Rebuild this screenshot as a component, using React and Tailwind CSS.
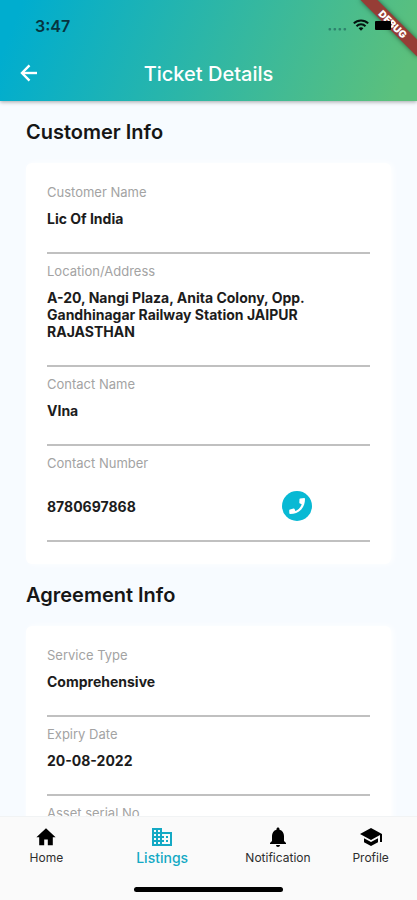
import React from "react";
import { MdBusiness, MdNotifications, MdSchool } from "react-icons/md";

const HomeIcon = ({ className }) => {
  return (
    <svg className={className} viewBox="0 0 24 24" fill="currentColor">
      <path d="M12 3.2L21.6 12.2H18.8V20.2H13.8V14.4H10.2V20.2H5.2V12.2H2.4Z" />
    </svg>
  );
};

const customerInfo = [
  { label: "Customer Name", value: "Lic Of India" },
  {
    label: "Location/Address",
    value: "A-20, Nangi Plaza, Anita Colony, Opp. Gandhinagar Railway Station JAIPUR RAJASTHAN",
  },
  { label: "Contact Name", value: "VIna" },
  { label: "Contact Number", value: "8780697868", phone: true },
];

const agreementInfo = [
  { label: "Service Type", value: "Comprehensive" },
  { label: "Expiry Date", value: "20-08-2022" },
  { label: "Asset serial No", value: "" },
];

const tabs = [
  { name: "Home", icon: HomeIcon },
  { name: "Listings", icon: MdBusiness, active: true },
  { name: "Notification", icon: MdNotifications },
  { name: "Profile", icon: MdSchool },
];

const StatusBar = () => {
  return (
    <div className="flex h-[46px] items-end justify-between pr-[26px] pl-[35px] text-[#06343f]">
      <span className="pb-2.5 text-[16px] leading-5 font-semibold">3:47</span>
      <div className="relative z-10 flex items-center gap-[6px] pb-[14px]">
        {/* signal */}
        <svg width="19" height="14" viewBox="0 0 19 14" fill="#1d5c58" fillOpacity="0.6">
          <rect x="0.5" y="10" width="2.6" height="2.4" rx="1" />
          <rect x="5.5" y="10" width="2.6" height="2.4" rx="1" />
          <rect x="10.5" y="10" width="2.6" height="2.4" rx="1" />
          <rect x="15.5" y="10" width="2.6" height="2.4" rx="1" />
        </svg>
        {/* wifi */}
        <svg width="16" height="12" viewBox="0 0 16 12" fill="none" stroke="#04120f" strokeWidth="2">
          <path d="M0.8 4.4C4.8 0.4 11.2 0.4 15.2 4.4" />
          <path d="M3.5 7.2C6 4.7 10 4.7 12.5 7.2" />
          <path d="M8 11.8L5.6 9.3C7 8 9 8 10.4 9.3Z" fill="#04120f" stroke="none" />
        </svg>
        <span className="h-[9px] w-4 rounded-[1px] bg-black"></span>
      </div>
    </div>
  );
};

const Header = () => {
  return (
    <header className="relative z-10 bg-linear-[112deg,#00adcf_5%,#5cc07c_95%] shadow-[0_1px_4px_rgba(0,0,0,0.35)]">
      <div className="relative overflow-hidden">
        <StatusBar />
        <div className="flex h-[55px] items-center px-[18px]">
          <button aria-label="Back" className="text-white">
            <svg width="22" height="22" viewBox="0 0 22 22" fill="none" stroke="currentColor" strokeWidth="2.4">
              <path d="M19 10H4.5" />
              <path d="M11.5 2.4L4 10L11.5 17.6" />
            </svg>
          </button>
          <h1 className="flex-1 pr-[22px] text-center text-[20px] leading-6 font-medium text-white">
            Ticket Details
          </h1>
        </div>
        {/* ribbon */}
        <div className="absolute top-[18px] -right-4 h-3 w-20 rotate-45 bg-[#963d36] text-center text-[10px] leading-3 font-black text-white shadow-[0_0_5px_rgba(0,0,0,0.5)]">
          DEBUG
        </div>
      </div>
    </header>
  );
};

const PhoneIcon = () => {
  return (
    <svg width="18" height="18" viewBox="0 0 18 18" fill="currentColor">
      <path d="M12.2 1.4L16.2 1.1C16.8 1.1 17 1.4 17 2C17 5.6 16 9.4 13.3 12.5C10.4 15.8 6.4 17 2.2 17.1C1.6 17.1 1.3 16.8 1.3 16.3L1.2 13.4C1.2 12.9 1.5 12.5 2 12.4L5.5 11.6C6.1 11.5 6.5 11.7 6.7 12.2L7.3 13.9C10.4 12.8 12.8 10.3 13.7 7.2L12 6.5C11.5 6.3 11.3 5.9 11.3 5.4L11.5 2.1C11.5 1.7 11.8 1.4 12.2 1.4Z" />
    </svg>
  );
};

const Field = ({ label, value, phone }) => {
  return (
    <div className="border-b-2 border-[#c0c0c0] pt-[9px]">
      <dt className="text-[13px] leading-[17px] text-[#a3a3a3]">{label}</dt>
      {phone ? (
        <dd className="mt-[19px] mb-[19px] flex w-[82%] items-center justify-between text-[14px] leading-[17px] font-bold text-[#1c1c1c]">
          {value}
          <button
            aria-label="Call"
            className="flex h-[30px] w-[30px] items-center justify-center rounded-full bg-[#08b9d4] text-white"
          >
            <PhoneIcon />
          </button>
        </dd>
      ) : (
        <dd className="mt-[9px] mb-[25px] min-h-[17px] w-[82%] text-[14px] leading-[17px] font-bold text-[#1c1c1c]">
          {value}
        </dd>
      )}
    </div>
  );
};

const InfoSection = ({ title, fields }) => {
  return (
    <section>
      <h2 className="py-[18px] text-[20px] leading-[26px] font-semibold text-[#161616]">{title}</h2>
      <dl className="rounded-md bg-white px-[21px] pt-3 pb-[22px] shadow-[2px_0_6px_#ffffff]">
        {fields.map((field) => (
          <Field key={field.label} {...field} />
        ))}
      </dl>
    </section>
  );
};

const BottomNav = () => {
  return (
    <nav className="border-t border-[#f1f3f4] bg-[#fafafa]">
      <div className="grid h-[66px] grid-cols-[2fr_3fr_2fr_2fr] pt-2">
        {tabs.map((tab) => (
          <a
            key={tab.name}
            href="#"
            className={
              tab.active
                ? "flex flex-col items-center text-[14px] leading-[18px] font-medium text-[#14a9c4]"
                : "flex flex-col items-center text-[12px] leading-[18px] text-[#2e2e2e]"
            }
          >
            <tab.icon className={tab.active ? "h-6 w-6" : "h-6 w-6 text-black"} />
            {tab.name}
          </a>
        ))}
      </div>
      <div className="mx-auto mt-1 mb-2 h-[5px] w-[149px] rounded-full bg-black"></div>
    </nav>
  );
};

const App = () => {
  return (
    <div className="flex h-screen flex-col overflow-hidden bg-[#f7fbff] font-['Inter',sans-serif]">
      <Header />
      <main className="min-h-0 flex-1 overflow-hidden px-[26px]">
        <InfoSection title="Customer Info" fields={customerInfo} />
        <InfoSection title="Agreement Info" fields={agreementInfo} />
      </main>
      <BottomNav />
    </div>
  );
};

export default App;
